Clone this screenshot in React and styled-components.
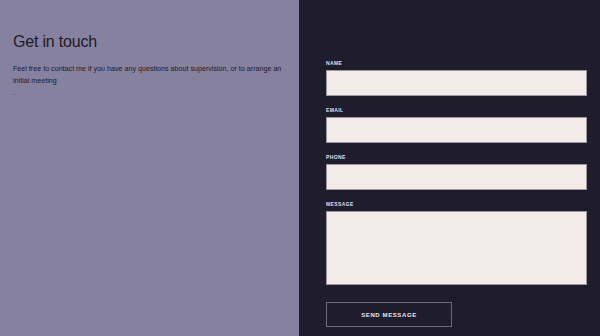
import React from "react";
import styled, { createGlobalStyle } from "styled-components";

const GlobalStyle = createGlobalStyle`
  html, body { margin: 0; padding: 0; }
  body { font-family: "Liberation Sans", Arial, sans-serif; }
  * { box-sizing: border-box; }
`;

const Page = styled.div`
  display: flex;
  width: 600px;
  height: 336px;
  overflow: hidden;
`;

const Intro = styled.section`
  width: 299px;
  flex-shrink: 0;
  background: #86819f;
  color: #1c1a28;
  padding: 32px 13px 0 13px;
`;

const Title = styled.h2`
  margin: 0 0 12px;
  font-size: 16px;
  line-height: 19px;
  font-weight: 400;
  letter-spacing: -0.2px;
`;

const Text = styled.p`
  margin: 0;
  font-size: 7.15px;
  line-height: 12px;
`;

const FormPanel = styled.section`
  flex: 1;
  background: #1f1c2c;
  padding: 60px 13px 0 27px;
`;

const Form = styled.form`
  display: flex;
  flex-direction: column;
`;

const Field = styled.div`
  display: flex;
  flex-direction: column;
  margin-bottom: ${({ $last }) => ($last ? "17px" : "11px")};
`;

const Label = styled.label`
  font-size: 5px;
  line-height: 6px;
  font-weight: 700;
  letter-spacing: 0.4px;
  color: #e4dfe6;
  margin-bottom: 4px;
  text-transform: uppercase;
`;

const Input = styled.input`
  height: 26px;
  width: 100%;
  border: 1px solid #9d96a3;
  background: #f2ebe7;
  outline: none;
  padding: 0 6px;
`;

const Area = styled.textarea`
  height: 74px;
  width: 100%;
  border: 1px solid #9d96a3;
  background: #f2ebe7;
  outline: none;
  resize: none;
  padding: 6px;
`;

const Button = styled.button`
  width: 126px;
  height: 25px;
  background: transparent;
  border: 1px solid #6d687c;
  color: #ece7ee;
  font-family: inherit;
  font-size: 6px;
  font-weight: 700;
  letter-spacing: 0.6px;
  text-transform: uppercase;
  padding: 0;
  cursor: pointer;
`;

export default function App() {
  const fields = ["Name", "Email", "Phone"];

  return (
    <>
      <GlobalStyle />
      <Page>
        <Intro>
          <Title>Get in touch</Title>
          <Text>
            Feel free to contact me if you have any questions about supervision, or to arrange an
            initial meeting
          </Text>
          <Text>.</Text>
        </Intro>
        <FormPanel>
          <Form onSubmit={(e) => e.preventDefault()}>
            {fields.map((name) => (
              <Field key={name}>
                <Label>{name}</Label>
                <Input type="text" />
              </Field>
            ))}
            <Field $last>
              <Label>Message</Label>
              <Area />
            </Field>
            <div>
              <Button type="submit">Send message</Button>
            </div>
          </Form>
        </FormPanel>
      </Page>
    </>
  );
}
